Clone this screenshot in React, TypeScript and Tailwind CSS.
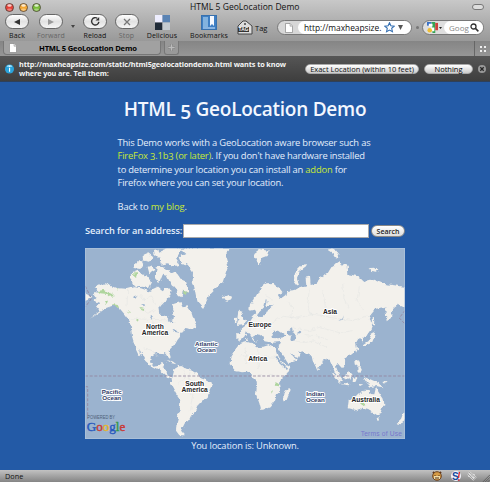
import React from "react";

const LAND = "#f3f1ec";
const SEA = "#9bb3cf";

function ToolButton({ label, wide, dim, tw, children }: { label: string; wide: string; dim?: boolean; tw: string; children: React.ReactNode }) {
  return (
    <div className={`flex shrink-0 flex-col items-center ${wide}`}>
      <div className="flex h-[15px] w-[24px] items-center justify-center rounded-full border border-[#666] bg-gradient-to-b from-[#fff] via-[#e2e2e2] to-[#f5f5f5]">{children}</div>
      <span className={`mt-[2px] whitespace-nowrap text-[7px] leading-[9px] ${tw} ${dim ? "text-[#666]" : "text-[#111]"}`}>{label}</span>
    </div>
  );
}

function Lamp({ color }: { color: string }) {
  return (
    <svg width="9" height="9" viewBox="0 0 9 9">
      <circle cx="4.5" cy="4.5" r="4" fill={color} stroke="#4b4038" strokeWidth=".8" />
      <ellipse cx="4.5" cy="2.5" rx="2.2" ry="1.3" fill="#fff" opacity=".75" />
      <ellipse cx="4.5" cy="6.6" rx="2.3" ry="1.2" fill="#fff" opacity=".35" />
    </svg>
  );
}

function MapLabel({ x, y, lines, size = 20, color = "#252525" }: { x: number; y: number; lines: string[]; size?: number; color?: string }) {
  return (
    <text textAnchor="middle" fontFamily="Liberation Sans, Arial, sans-serif" fontWeight="bold" fontSize={size} fill={color} stroke="#fff" strokeWidth="6" strokeLinejoin="round" paintOrder="stroke">
      {lines.map((l, i) => (
        <tspan key={l} x={x} y={y + i * 18}>{l}</tspan>
      ))}
    </text>
  );
}

function WorldMap() {
  return (
    <svg className="block h-[191px] w-[320px]" viewBox="17 22 960 573" preserveAspectRatio="none">
      <defs>
        <filter id="coast" x="0" y="0" width="1" height="1" colorInterpolationFilters="sRGB">
          <feTurbulence type="fractalNoise" baseFrequency=".06" numOctaves="3" seed="8" />
          <feDisplacementMap in="SourceGraphic" scale="14" xChannelSelector="R" yChannelSelector="G" />
        </filter>
      </defs>
      <rect x="17" y="22" width="960" height="573" fill={SEA} />
      <g filter="url(#coast)">
        <rect x="0" y="0" width="1000" height="620" fill={SEA} />
        <g fill={LAND}>
          <path d="M40 165 57 150 46 141 75 128 110 142 145 145 165 140 185 143 210 152 235 140 250 152 262 140 277 150 270 167 255 185 240 200 243 222 262 228 272 242 281 245 284 225 278 205 285 190 302 185 310 200 325 197 337 215 343 235 352 258 335 265 318 262 306 280 292 297 282 315 268 330 274 349 268 351 257 338 232 336 215 346 212 361 222 375 239 372 247 364 255 368 250 380 263 385 262 400 275 410 286 405 285 411 270 414 257 404 240 388 216 376 199 362 185 335 178 322 188 350 180 342 165 310 158 287 155 260 150 240 135 220 120 202 100 195 80 202 60 217 32 234 62 211 50 197 60 187 43 180 52 171Z" />
          <path d="M285 385 300 376 315 382 340 388 355 400 363 412 385 420 401 430 391 450 385 472 370 482 357 495 350 510 335 525 328 540 318 545 311 558 305 570 317 584 300 584 290 570 292 545 300 515 303 480 290 460 274 430 279 410 283 395Z" />
          <path d="M298 50 318 40 307 30 320 22 450 22 440 50 446 75 438 100 430 125 410 141 391 160 378 190 370 204 358 190 350 165 345 140 340 120 341 95 325 72 305 67Z" />
          <path d="M430 170 442 161 458 168 456 178 440 183Z" />
          <path d="M158 98 175 90 188 101 205 105 218 125 209 142 190 138 165 140 155 121Z" />
          <path d="M162 72 180 60 195 67 183 85 163 82ZM190 45 207 38 222 50 209 63 191 59ZM224 28 238 24 240 47 226 48ZM238 35 270 22 310 20 290 55 301 72 282 78 266 68 244 72ZM205 80 220 74 225 88 210 98ZM232 80 248 78 271 90 275 107 250 102 240 128 226 111ZM261 102 285 91 302 116 321 125 328 156 310 150 307 170 290 162 295 145 278 135 270 122ZM253 156 270 166 260 182 247 171ZM345 248 354 256 350 263 336 259Z" />
          <path d="M477 210 488 214 485 225 498 241 494 250 474 253 481 238 474 230ZM463 232 474 231 474 245 464 248Z" />
          <path d="M510 210 512 190 530 166 544 140 562 128 583 127 600 142 610 155 595 162 603 174 618 164 621 151 641 149 663 142 681 137 679 112 692 108 694 133 710 129 722 112 744 99 756 80 778 65 802 75 804 100 836 107 855 124 885 117 917 130 945 134 980 139 980 203 957 192 939 206 935 232 922 242 920 217 934 197 911 203 883 208 868 227 879 245 875 266 863 283 850 290 852 303 837 294 830 307 833 324 822 340 807 349 791 354 797 370 788 383 776 369 770 378 781 405 791 418 784 419 767 397 759 374 749 352 730 362 716 381 710 380 700 360 697 347 679 338 656 329 664 340 656 359 628 368 612 344 600 328 598 316 603 304 580 306 555 302 549 286 532 290 536 303 526 301 513 284 502 272 498 288 480 301 471 294 471 278 486 278 484 264 496 254 511 245 519 232 531 220 524 207Z" />
          <path d="M481 309 500 304 517 307 531 320 552 318 569 313 590 323 599 350 617 371 635 375 624 397 605 415 602 430 606 450 593 461 586 480 571 500 554 507 545 507 540 488 530 461 532 444 528 420 517 401 502 393 485 395 468 391 451 370 453 348 465 330Z" />
          <path d="M618 449 628 440 634 447 622 478 612 479 612 462Z" />
          <path d="M805 503 808 480 819 475 832 464 845 458 853 447 871 448 874 460 885 461 890 439 901 456 913 474 915 493 906 517 890 523 876 514 864 505 849 501 831 509ZM891 531 902 530 895 538ZM972 516 980 524 964 551 951 548 965 535Z" />
          <path d="M756 392 771 405 787 422 781 426 766 412ZM793 405 813 394 820 403 813 417 798 416ZM784 426 813 430 811 434 785 431ZM821 411 834 408 829 424 820 421ZM825 354 834 358 841 374 848 389 838 394 837 380 826 371ZM851 410 871 415 898 427 909 440 891 436 875 439 863 427ZM836 430 852 431 842 436ZM912 424 925 420 918 431ZM829 326 834 329 830 336ZM715 382 722 386 718 391Z" />
          <path d="M642 122 648 93 665 75 683 70 680 77 661 91 656 116 662 129 650 133ZM524 38 542 25 568 30 562 46 546 52 541 72 530 60ZM744 27 763 22 778 43 780 53 765 48 760 38ZM868 82 886 81 901 88 893 96 873 93ZM917 203 937 190 941 205 930 235 923 239ZM879 275 888 271 885 288 878 306 862 313 850 313 868 301ZM877 228 885 230 884 255 879 250ZM8 155 26 162 36 172 18 181ZM258 358 282 363 291 371 274 367ZM294 372 310 376 298 380ZM500 292 506 294 505 302 500 300Z" />
        </g>
        <g fill={SEA}>
          <path d="M541 213 555 199 559 176 565 179 561 195 575 197 585 191 566 209 559 222 549 229 535 228Z" />
          <path d="M576 285 582 270 599 270 612 279 623 288 595 293 578 292ZM626 270 638 263 641 278 652 287 645 300 633 299 635 285 626 281ZM656 270 663 276 654 279ZM585 352 594 348 610 369 624 382 618 384 602 370ZM635 338 648 350 660 352 651 356 637 346ZM536 280 554 302 561 310 543 313 530 300 520 288Z" />
          <path d="M280 265 292 268 300 276 283 273ZM162 167 174 164 169 174ZM185 188 200 193 196 199ZM210 225 216 223 219 240ZM780 240 789 234 794 224 790 238Z" />
        </g>
        <g fill="#afd59e">
          <path d="M55 151 72 148 87 154 101 160 106 166 93 168 84 160 63 158ZM98 190 115 193 120 202 105 199ZM77 181 86 180 82 190ZM166 95 174 99 170 109 164 104ZM313 150 322 154 320 163 311 158ZM180 199 190 201 195 211 187 209ZM169 234 178 240 175 246ZM111 142 117 144 115 150ZM841 486 858 486 858 491 849 494ZM584 425 601 429 598 434 587 432ZM573 452 578 449 574 459ZM145 212 151 214 150 217Z" />
        </g>
        <g fill="none" stroke="#dcdedd" strokeWidth="1.1">
          <path d="M149 234 278 238 286 246M193 320 218 330 233 347M518 269 545 247 575 251 610 226 650 232 705 220 755 231 820 240 862 226M640 262 690 270 720 260 780 276 820 270M648 301 675 306 705 300 743 321M497 320 502 372M535 319 537 384M481 345 600 350M540 405 594 404M312 382 318 411 299 428M333 392 326 415 350 420M320 449 344 465 333 510M145 147 143 200" />
          <path d="M180 161 195 180 217 166 228 190M191 200 205 218 229 206M224 229 218 254 240 272M250 272 270 284M625 182 640 205 637 235M690 147 685 190 697 226M730 149 738 196 725 229M790 127 794 174 810 207M840 140 833 178 850 206M558 165 580 176M679 282 710 285 745 297" />
        </g>
      </g>
      <g fill="none" stroke="#94849e" strokeWidth="2.5" strokeDasharray="9 5">
        <path d="M17 406H977M18 136 36 174 18 199M18 438H25V533M977 209 960 232 977 250" />
      </g>
      <MapLabel x={227} y={266} lines={["North", "America"]} />
      <MapLabel x={542} y={260} lines={["Europe"]} />
      <MapLabel x={752} y={219} lines={["Asia"]} />
      <MapLabel x={535} y={361} lines={["Africa"]} />
      <MapLabel x={346} y={435} lines={["South", "America"]} />
      <MapLabel x={859} y={483} lines={["Australia"]} />
      <MapLabel x={381} y={317} size={18.5} color="#303c66" lines={["Atlantic", "Ocean"]} />
      <MapLabel x={97} y={460} size={18.5} color="#303c66" lines={["Pacific", "Ocean"]} />
      <MapLabel x={708} y={465} size={18.5} color="#303c66" lines={["Indian", "Ocean"]} />
      <text x="24" y="535" fontSize="14" textLength="83" lengthAdjust="spacingAndGlyphs" fill="#4e6077" fontFamily="Liberation Sans, sans-serif">POWERED BY</text>
      <text x="22" y="570" fontSize="39" textLength="116" lengthAdjust="spacingAndGlyphs" fontFamily="Liberation Serif, serif" strokeWidth="1.2">
        <tspan fill="#2859bd" stroke="#2859bd">G</tspan><tspan fill="#c93935" stroke="#c93935">o</tspan><tspan fill="#e5b52a" stroke="#e5b52a">o</tspan><tspan fill="#2859bd" stroke="#2859bd">g</tspan><tspan fill="#329848" stroke="#329848">l</tspan><tspan fill="#c93935" stroke="#c93935">e</tspan>
      </text>
      <text x="844" y="586" fontSize="20" textLength="124" fill="#7777cc" fontFamily="Liberation Sans, sans-serif">Terms of Use</text>
      <rect x="18" y="23" width="958" height="571" fill="none" stroke="#b0c5dd" strokeWidth="2" />
    </svg>
  );
}

const PageIcon = ({ className }: { className: string }) => (
  <svg className={className} viewBox="0 0 8 10"><path d="M.5.5h4.6l2.4 2.6v6.4h-7z" fill="#fff" stroke="#888" strokeWidth=".7" /><path d="M5 .5v2.7h2.5" fill="#ddd" stroke="#888" strokeWidth=".5" /></svg>
);

export default function App() {
  return (
    <div className="flex h-[482px] w-[490px] flex-col overflow-hidden bg-[#235aa6] font-['Open_Sans','Noto_Sans',sans-serif]">
      <header className="flex h-[41px] shrink-0 flex-col bg-gradient-to-b from-[#c8c8c8] to-[#999] font-medium text-[#111]">
        <div className="flex h-[14px] shrink-0 items-center">
          <div className="flex w-[190px] gap-[4.5px] pl-[5px]"><Lamp color="#e64137" /><Lamp color="#f4a733" /><Lamp color="#79bd38" /></div>
          <span className="w-[240px] whitespace-nowrap text-[8.5px] leading-[14px] tracking-[.05px]">HTML 5 GeoLocation Demo</span>
          <span className="ml-[42px] h-[6px] w-[12px] rounded-full border border-[#777] bg-[#ddd]" />
        </div>
        <div className="flex h-[27px] items-start">
          <div className="flex w-[274px] shrink-0">
            <ToolButton label="Back" wide="w-[34px]" tw="tracking-[.1px]"><svg width="8" height="8" viewBox="0 0 8 8"><path d="M1 4 7 1v6z" fill="#333" /></svg></ToolButton>
            <ToolButton label="Forward" wide="w-[34px]" tw="tracking-[.1px]" dim><svg width="8" height="8" viewBox="0 0 8 8"><path d="M7 4 1 1v6z" fill="#999" /></svg></ToolButton>
            <svg className="mt-[11px] h-[3px] w-[10px]" viewBox="0 0 10 3"><path d="M3 0h4L5 3z" fill="#444" /></svg>
            <ToolButton label="Reload" wide="w-[34px]" tw="tracking-[.1px]"><svg width="11" height="11" viewBox="0 0 12 12"><path d="M8 2.5a4 4 0 1 0 1.7 4" fill="none" stroke="#333" strokeWidth="1.5" /><path d="M6 4.8h4V1z" fill="#333" /></svg></ToolButton>
            <ToolButton label="Stop" wide="w-[29px]" tw="tracking-[.2px]" dim><svg width="8" height="8" viewBox="0 0 8 8"><path d="m1 1 6 6m0-6L1 7" stroke="#777" strokeWidth="1.3" /></svg></ToolButton>
            <div className="ml-[2px] flex w-[38px] flex-col items-center">
              <svg className="mt-[1px]" width="15" height="15" viewBox="0 0 15 15"><path fill="#eef" d="M0 0h7.5v7.5H0z" /><path fill="#5a83b4" d="M7.5 0H15v7.5H7.5z" /><path fill="#202b38" d="M0 7.5h7.5V15H0z" /><path fill="#c5cbd1" d="M7.5 7.5H15V15H7.5z" /></svg>
              <span className="mt-[1px] text-[7px] leading-[9px] tracking-[.1px]">Delicious</span>
            </div>
            <div className="flex w-[56px] flex-col items-center">
              <svg className="mt-[1px]" width="16" height="15" viewBox="0 0 16 15"><rect x=".5" y=".5" width="15" height="14" fill="#3f7fc4" stroke="#3871ad" /><path d="M2 2h5v10H2z" fill="#83b3df" /><path d="M9 1h4v10l-2-2-2 2z" fill="#f6f9ff" /><path d="M2 13h12" stroke="#d5eaff" /></svg>
              <span className="mt-[1px] text-[7px] leading-[9px] tracking-[.12px]">Bookmarks</span>
            </div>
            <svg className="mt-[5px] h-[16px] w-[16px] shrink-0" viewBox="0 0 16 16"><path d="M1 7 6 2h3l6 5v8H1z" fill="#ddd" stroke="#444" /><circle cx="8" cy="5" r="1" fill="#444" /><path d="M1 8h11v5H1z" fill="#333" /><text x="1.6" y="12.4" fontSize="4.8" fontFamily="Liberation Sans, sans-serif" fontWeight="bold" fill="#fff">TAG</text></svg>
            <span className="ml-[2px] mt-[9px] text-[7.5px] leading-[10px]">Tag</span>
          </div>
          <div className="ml-[3px] mt-[6px] flex h-[15px] w-[135px] shrink-0 items-center rounded-full border border-[#777] bg-[#d7d7d7] pl-[7px]">
            <PageIcon className="h-[10px] w-[8px] shrink-0" />
            <div className="ml-[5px] flex h-[13px] grow items-center rounded-full bg-white pl-[6px]">
              <span className="w-[80px] shrink-0 whitespace-nowrap text-[8.4px] leading-[12px] tracking-[-.03px]">http://maxheapsize.</span>
              <svg className="h-[11px] w-[11px] shrink-0" viewBox="0 0 12 12"><path d="m6 .8 1.5 3.3 3.7.4-2.8 2.4.8 3.7L6 8.8l-3.2 1.8.8-3.7L.8 4.5l3.7-.4z" fill="#fff" stroke="#346fb2" strokeWidth="1.2" /></svg>
              <svg className="ml-[3px] h-[5px] w-[5px] shrink-0" viewBox="0 0 5 5"><path d="M0 0h5L2.5 5z" fill="#555" /></svg>
            </div>
          </div>
          <span className="ml-[4px] mt-[12px] h-[3px] w-[3px] shrink-0 rounded-full bg-[#777]" />
          <div className="ml-[3px] mt-[6px] flex h-[15px] w-[62px] shrink-0 items-center rounded-full border border-[#777] bg-[#dedede] pl-[4px]">
            <svg className="h-[11px] w-[11px] shrink-0" viewBox="0 0 12 12"><path fill="#3870c5" d="M0 0h5v4H0z" /><path fill="#36a454" d="M5 0h4v12H6z" /><path fill="#ce403a" d="M9 1h3v8H9z" /><path d="M2 2h4v3H2zM4 6h4v4H4z" fill="#fff" /><circle cx="3" cy="9" r="2.5" fill="#efbe34" /></svg>
            <svg className="ml-[1px] h-[2px] w-[3px] shrink-0" viewBox="0 0 3 2"><path d="M0 0h3L1.5 2z" fill="#222" /></svg>
            <div className="ml-[2px] flex h-[13px] grow items-center rounded-full bg-white pl-[5px]"><span className="w-[21px] text-[8px] text-[#888]">Goog</span><svg className="h-[9px] w-[9px] shrink-0" viewBox="0 0 9 9"><circle cx="3.5" cy="3.5" r="2.5" fill="none" stroke="#333" strokeWidth="1.3" /><path d="m5.4 5.4 3 3" stroke="#333" strokeWidth="1.5" /></svg></div>
          </div>
        </div>
      </header>
      <nav className="flex h-[16px] shrink-0 border-b border-[#555] bg-gradient-to-b from-[#858585] to-[#969696]">
        <div className="ml-[3px] flex h-[14px] w-[158px] items-center rounded-b-[4px] border-x border-b border-[#777] bg-[#a1a1a1] pl-[5px]"><PageIcon className="h-[10px] w-[8px]" /><span className="ml-[22px] whitespace-nowrap text-[7.6px] font-bold leading-[12px] tracking-[-.17px]">HTML 5 GeoLocation Demo</span></div>
        <div className="ml-[3px] flex h-[14px] w-[15px] items-center justify-center rounded-b-[3px] border border-t-0 border-[#777] bg-[#999]"><svg width="7" height="7" viewBox="0 0 7 7"><path d="M2.5 0h2v2.5H7v2H4.5V7h-2V4.5H0v-2h2.5z" fill="#bbb" stroke="#777" strokeWidth=".5" /></svg></div>
        <div className="ml-auto flex w-[16px] items-center justify-center border-l border-[#666]"><svg width="6" height="6" viewBox="0 0 6 6"><path d="M0 0h2v2H0zm4 0h2v2H4zM0 4h2v2H0zm4 0h2v2H4z" fill="#eee" /></svg></div>
      </nav>
      <div className="flex h-[25px] shrink-0 items-center border-b border-[#2e405b] bg-gradient-to-b from-[#555] to-[#3e3e3e]">
        <svg className="ml-[4px] h-[10px] w-[11px]" viewBox="0 0 11 11"><circle cx="5.5" cy="5.5" r="5" fill="#2ba3da" /><path d="M2.5 3a3 2 0 0 1 6 0z" fill="#aee6ff" /><path d="M5 2.5h1.2v1.2H5zm0 2h1.2v4H5z" fill="#fff" /></svg>
        <p className="ml-[4px] w-[286px] whitespace-nowrap text-[7.3px] font-bold leading-[9px] tracking-[-.12px] text-[#f4f4f4]">http://maxheapsize.com/static/html5geolocationdemo.html wants to know<br />where you are. Tell them:</p>
        <button className="h-[10px] w-[114px] shrink-0 whitespace-nowrap rounded-full border border-[#aaa] bg-gradient-to-b from-white to-[#ccc] text-[7.5px] font-medium leading-[8px] tracking-[-.02px] text-[#111]">Exact Location (within 10 feet)</button>
        <button className="ml-[5px] h-[10px] w-[49px] shrink-0 rounded-full border border-[#aaa] bg-gradient-to-b from-white to-[#ccc] text-[7.5px] font-medium leading-[8px]">Nothing</button>
        <svg className="ml-[5px] h-[8px] w-[8px]" viewBox="0 0 8 8"><circle cx="4" cy="4" r="4" fill="#999" /><path d="m2.3 2.3 3.4 3.4m0-3.4L2.3 5.7" stroke="#252525" strokeWidth="1.3" /></svg>
      </div>
      <main className="flex h-[388px] shrink-0 flex-col items-center text-[#e4eefb]">
        <h1 className="mt-[13px] h-[28px] whitespace-nowrap text-[19px] font-semibold leading-[28px] tracking-[-.25px] text-[#f3f7ff]">HTML <span className="relative top-[3px]">5</span> GeoLocation Demo</h1>
        <div className="mt-[13px] w-[255px] whitespace-nowrap text-[9.4px] leading-[13.4px]">
          <p className="tracking-[-.2px]">This Demo works with a GeoLocation aware browser such as<br /><a className="text-[#c7e936]">FireFox <span className="relative top-[1px]">3</span>.1b<span className="relative top-[1px]">3</span> (or later)</a>. If you don't have hardware installed<br />to determine your location you can install an <a className="text-[#c7e936]">addon</a> for<br />Firefox where you can set your location.</p>
          <p className="mt-[10px] tracking-[-.15px]">Back to <a className="text-[#c7e936]">my blog</a>.</p>
        </div>
        <div className="mt-[11px] flex h-[14px] w-[320px] items-center">
          <label className="w-[98.5px] whitespace-nowrap text-[9.3px] font-semibold leading-[14px] tracking-[-.12px]">Search for an address:</label>
          <span className="h-[14px] w-[186px] border border-[#aaa] bg-white" />
          <button className="ml-[2px] h-[12px] w-[34px] rounded-full border border-[#888] bg-gradient-to-b from-white to-[#ddd] text-[7px] font-semibold leading-[9px] text-[#222]">Search</button>
        </div>
        <div className="mt-[10px]"><WorldMap /></div>
        <p className="whitespace-nowrap text-[9.3px] leading-[14px] tracking-[-.15px]">You location is: Unknown.</p>
      </main>
      <footer className="flex h-[12px] shrink-0 items-center bg-gradient-to-b from-[#c2c2c2] to-[#858585] pl-[5px] text-[7.3px] leading-[12px] text-[#111]">
        <span className="w-[427px]">Done</span>
        <svg className="h-[10px] w-[10px]" viewBox="0 0 10 10"><path d="M2 2 1 1m7 1 1-1" stroke="#5c3419" strokeWidth="2" /><circle cx="5" cy="5" r="4.3" fill="#d69b45" stroke="#6b4220" /><path d="M2 5h6v3H2z" fill="#f1dca6" /><path d="M3 4v1m4-1v1M3 7h4" stroke="#50331c" /></svg>
        <svg className="ml-[9px] h-[10px] w-[10px]" viewBox="0 0 10 10"><circle cx="5" cy="5" r="5" fill="#f2f2fa" /><text x="1" y="8.7" fontFamily="Liberation Sans, sans-serif" fontWeight="bold" fontSize="10" fill="#164b9d">S</text><path d="M8.4 1 7.5 7M7 9h1.5" stroke="#d72735" strokeWidth="1.4" /></svg>
        <svg className="ml-[6px] h-[10px] w-[10px]" viewBox="0 0 10 10"><path d="m2 1 7 6M1 3l6 6M3 2 2 6m5-3-1 5" stroke="#ddd" strokeWidth="2" /><path d="m2 1 7 6M1 3l6 6" stroke="#777" strokeWidth=".6" /></svg>
        <svg className="ml-auto h-[8px] w-[8px] self-end" viewBox="0 0 10 10"><path d="m1 10 9-9M4 10l6-6M7 10l3-3" stroke="#555" /></svg>
      </footer>
    </div>
  );
}
